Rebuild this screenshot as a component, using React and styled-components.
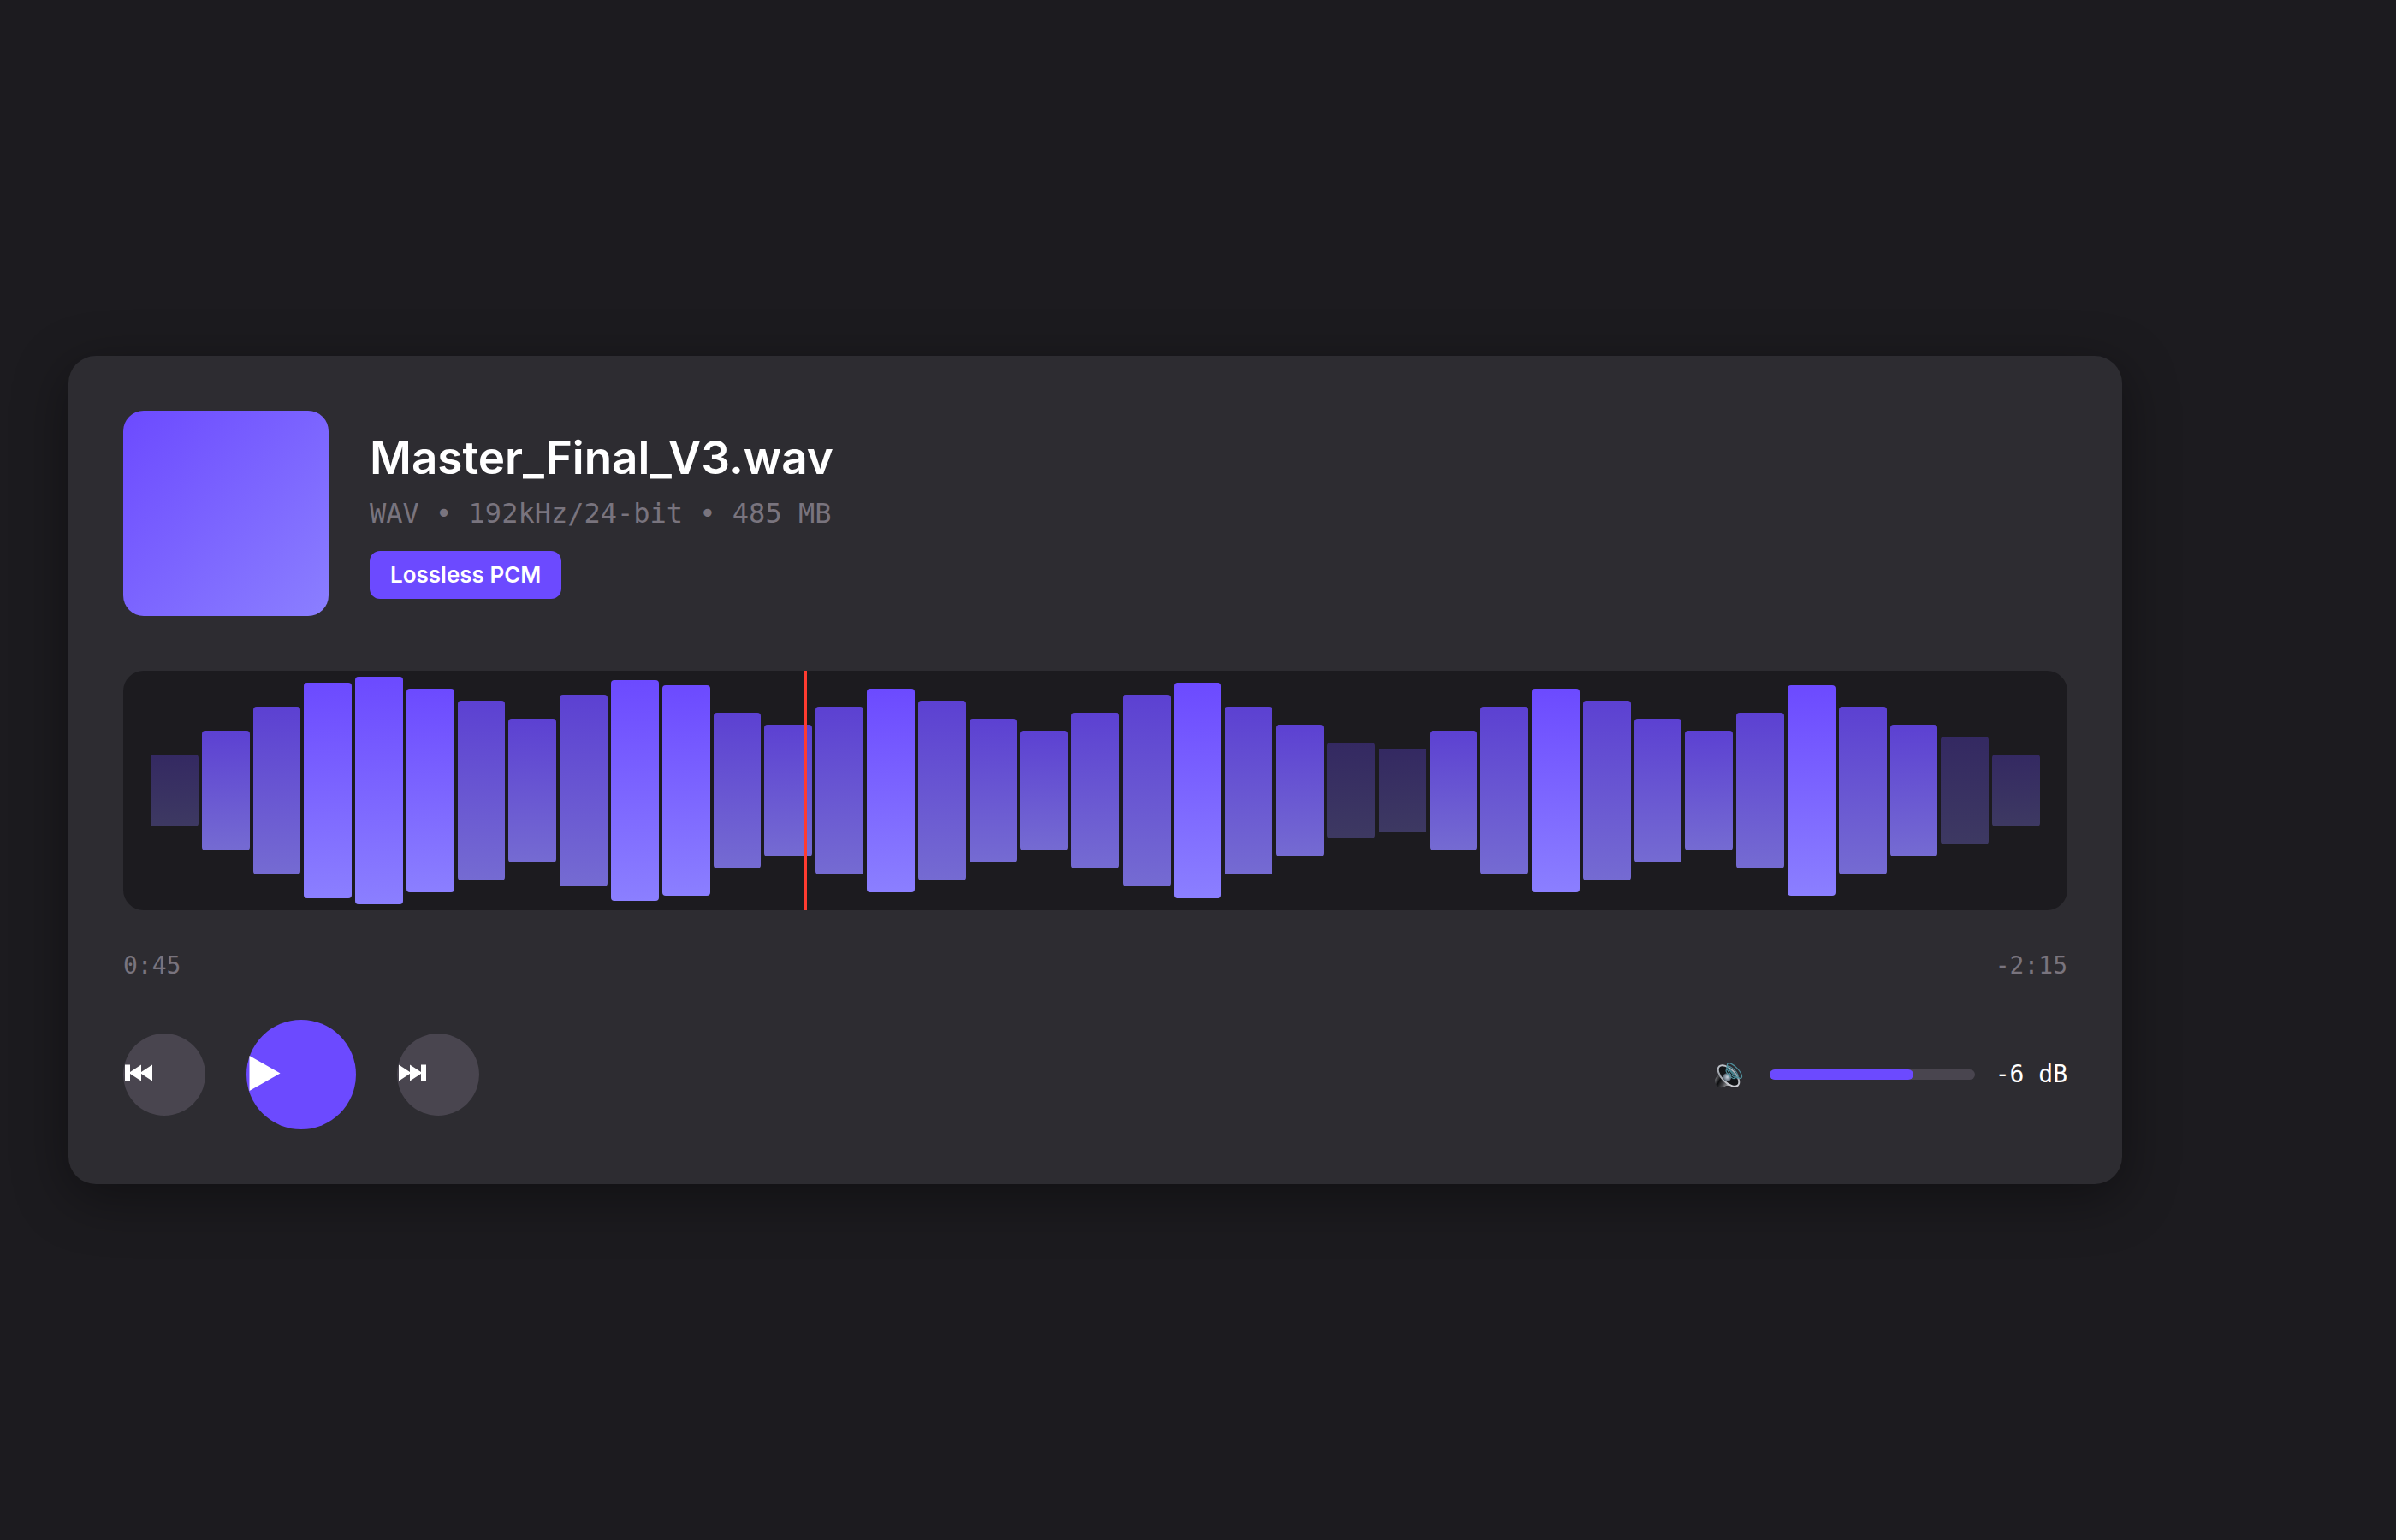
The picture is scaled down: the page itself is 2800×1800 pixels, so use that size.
import React, { useState } from "react";
import styled, { createGlobalStyle } from "styled-components";

const sans = `Inter, "Liberation Sans", sans-serif`;
const mono = `"DejaVu Sans Mono", "Liberation Mono", monospace`;

const GlobalStyle = createGlobalStyle`
  * { box-sizing: border-box; }
  body { margin: 0; background: #1c1b1f; color: #ffffff; font-family: ${sans}; }
  button { font: inherit; color: inherit; border: 0; cursor: pointer; }
`;

const Page = styled.main`
  min-height: 100vh;
  padding: 80px;
  display: flex;
  align-items: center;
`;

const Player = styled.section`
  flex: 1;
  max-width: 2400px;
  padding: 64px;
  border-radius: 32px;
  background: #2d2c31;
  box-shadow: 0 16px 64px rgba(0, 0, 0, 0.4);
`;

const Header = styled.header`
  display: flex;
  align-items: center;
  gap: 48px;
  margin-bottom: 64px;
`;

const Artwork = styled.div`
  flex: none;
  width: 240px;
  height: 240px;
  border-radius: 24px;
  background: linear-gradient(135deg, #6c4aff, #8b7fff);
`;

const TrackInfo = styled.div`
  display: flex;
  flex-direction: column;
  align-items: flex-start;
`;

const Title = styled.h1`
  margin: 0 0 12px;
  font-size: 53px;
  line-height: 70px;
  font-weight: 600;
`;

const Meta = styled.p`
  margin: 0 0 26px;
  font-family: ${mono};
  font-size: 32px;
  line-height: 36px;
  color: #79747e;
`;

const Badge = styled.span`
  padding: 12px 24px;
  border-radius: 12px;
  background: #6c4aff;
  font-size: 26px;
  line-height: 32px;
  font-weight: 600;
`;

const Waveform = styled.div`
  position: relative;
  display: flex;
  align-items: center;
  gap: 4px;
  height: 280px;
  padding: 0 32px;
  margin-bottom: 48px;
  border-radius: 24px;
  background: #1c1b1f;
  overflow: hidden;
`;

const opacityFor = (level) => (level >= 85 ? 1 : level >= 50 ? 0.8 : 0.3);

const Bar = styled.div`
  flex: 1;
  height: ${(p) => p.$level}%;
  border-radius: 4px;
  background: linear-gradient(180deg, #6c4aff, #8b7fff);
  opacity: ${(p) => opacityFor(p.$level)};
`;

const Playhead = styled.div`
  position: absolute;
  top: 0;
  bottom: 0;
  left: 35%;
  width: 4px;
  background: #ff3b30;
`;

const Times = styled.div`
  display: flex;
  justify-content: space-between;
  margin-bottom: 46px;
  font-family: ${mono};
  font-size: 28px;
  line-height: 34px;
  color: #79747e;
`;

const Controls = styled.div`
  display: flex;
  align-items: center;
  justify-content: space-between;
`;

const Transport = styled.div`
  display: flex;
  align-items: center;
  gap: 48px;
`;

const RoundButton = styled.button`
  display: flex;
  align-items: center;
  justify-content: flex-start;
  width: ${(p) => (p.$primary ? 128 : 96)}px;
  height: ${(p) => (p.$primary ? 128 : 96)}px;
  padding: 0 0 4px 2px;
  border-radius: 50%;
  background: ${(p) => (p.$primary ? "#6c4aff" : "#49454f")};
`;

const Volume = styled.div`
  display: flex;
  align-items: center;
  gap: 24px;
`;

const VolumeLabel = styled.label`
  display: flex;
`;

const Slider = styled.div`
  position: relative;
  width: 240px;
  height: 12px;
  border-radius: 6px;
  background: #49454f;
`;

const SliderFill = styled.div`
  height: 100%;
  border-radius: 6px;
  background: #6c4aff;
`;

const SliderInput = styled.input`
  position: absolute;
  inset: 0;
  width: 100%;
  height: 100%;
  margin: 0;
  opacity: 0;
  cursor: pointer;
`;

const Level = styled.output`
  font-family: ${mono};
  font-size: 28px;
  line-height: 34px;
`;

const levels = [
  30, 50, 70, 90, 95, 85, 75, 60, 80, 92, 88, 65, 55, 70, 85, 75, 60, 50, 65,
  80, 90, 70, 55, 40, 35, 50, 70, 85, 75, 60, 50, 65, 88, 70, 55, 45, 30,
];

const PreviousIcon = () => (
  <svg width="32" height="20" viewBox="0 0 32 20" fill="currentColor" aria-hidden="true">
    <path d="M0 0.5h6v8.6L19 0.5v8.4L32 0.5v19L19 11v8.5L6 11v8.5H0z" />
  </svg>
);

const NextIcon = () => (
  <svg width="32" height="20" viewBox="0 0 32 20" fill="currentColor" aria-hidden="true">
    <path d="M32 0.5h-6v8.6L13 0.5v8.4L0 0.5v19L13 11v8.5L26 11v8.5h6z" />
  </svg>
);

const PlayIcon = () => (
  <svg width="38" height="42" viewBox="0 0 38 42" fill="currentColor" aria-hidden="true">
    <path d="M1.5 1L37.5 21.5L1.5 42z" />
  </svg>
);

const SpeakerIcon = () => (
  <svg width="48" height="44" viewBox="0 -2 48 44" fill="none" aria-hidden="true">
    <defs>
      <linearGradient id="rim" x1="10" y1="8" x2="36" y2="34" gradientUnits="userSpaceOnUse">
        <stop offset="0" stopColor="#d4d8de" />
        <stop offset="0.5" stopColor="#9a9fa7" />
        <stop offset="1" stopColor="#e2e2e6" />
      </linearGradient>
      <linearGradient id="body" x1="8" y1="24" x2="26" y2="34" gradientUnits="userSpaceOnUse">
        <stop offset="0" stopColor="#77787c" />
        <stop offset="0.3" stopColor="#0d0e10" />
        <stop offset="0.6" stopColor="#4c4d51" />
        <stop offset="1" stopColor="#d7d8db" />
      </linearGradient>
      <radialGradient id="dome">
        <stop offset="0" stopColor="#c4d3df" />
        <stop offset="1" stopColor="#56626e" />
      </radialGradient>
    </defs>
    <path d="M14 20C9 22 7 26 8.5 30C10 35 16 37 21 33L34 33L13 14z" fill="url(#body)" />
    <ellipse cx="24" cy="21.5" rx="15.5" ry="7.8" transform="rotate(45 24 21.5)" fill="#121417" stroke="url(#rim)" strokeWidth="2" />
    <circle cx="22.5" cy="23" r="4.8" fill="url(#dome)" />
    <g stroke="#4f8f9c" strokeWidth="1.2">
      <ellipse cx="26.5" cy="19" rx="7" ry="2.8" transform="rotate(46 26.5 19)" />
      <ellipse cx="28.5" cy="17" rx="9" ry="3.4" transform="rotate(46 28.5 17)" />
      <ellipse cx="31" cy="15.5" rx="11.5" ry="4.2" transform="rotate(46 31 15.5)" />
    </g>
  </svg>
);

export default function App() {
  const [volume, setVolume] = useState(70);

  return (
    <>
      <GlobalStyle />
      <Page>
        <Player>
          <Header>
            <Artwork />
            <TrackInfo>
              <Title>Master_Final_V3.wav</Title>
              <Meta>WAV • 192kHz/24-bit • 485 MB</Meta>
              <Badge>Lossless PCM</Badge>
            </TrackInfo>
          </Header>
          <Waveform>
            {levels.map((level, i) => (
              <Bar key={i} $level={level} />
            ))}
            <Playhead />
          </Waveform>
          <Times>
            <span>0:45</span>
            <span>-2:15</span>
          </Times>
          <Controls>
            <Transport>
              <RoundButton type="button" aria-label="Previous"><PreviousIcon /></RoundButton>
              <RoundButton type="button" aria-label="Play" $primary><PlayIcon /></RoundButton>
              <RoundButton type="button" aria-label="Next"><NextIcon /></RoundButton>
            </Transport>
            <Volume>
              <VolumeLabel htmlFor="volume" aria-label="Volume"><SpeakerIcon /></VolumeLabel>
              <Slider>
                <SliderFill style={{ width: `${volume}%` }} />
                <SliderInput
                  id="volume"
                  type="range"
                  min="0"
                  max="100"
                  value={volume}
                  onChange={(e) => setVolume(Number(e.target.value))}
                />
              </Slider>
              <Level htmlFor="volume">-6 dB</Level>
            </Volume>
          </Controls>
        </Player>
      </Page>
    </>
  );
}
